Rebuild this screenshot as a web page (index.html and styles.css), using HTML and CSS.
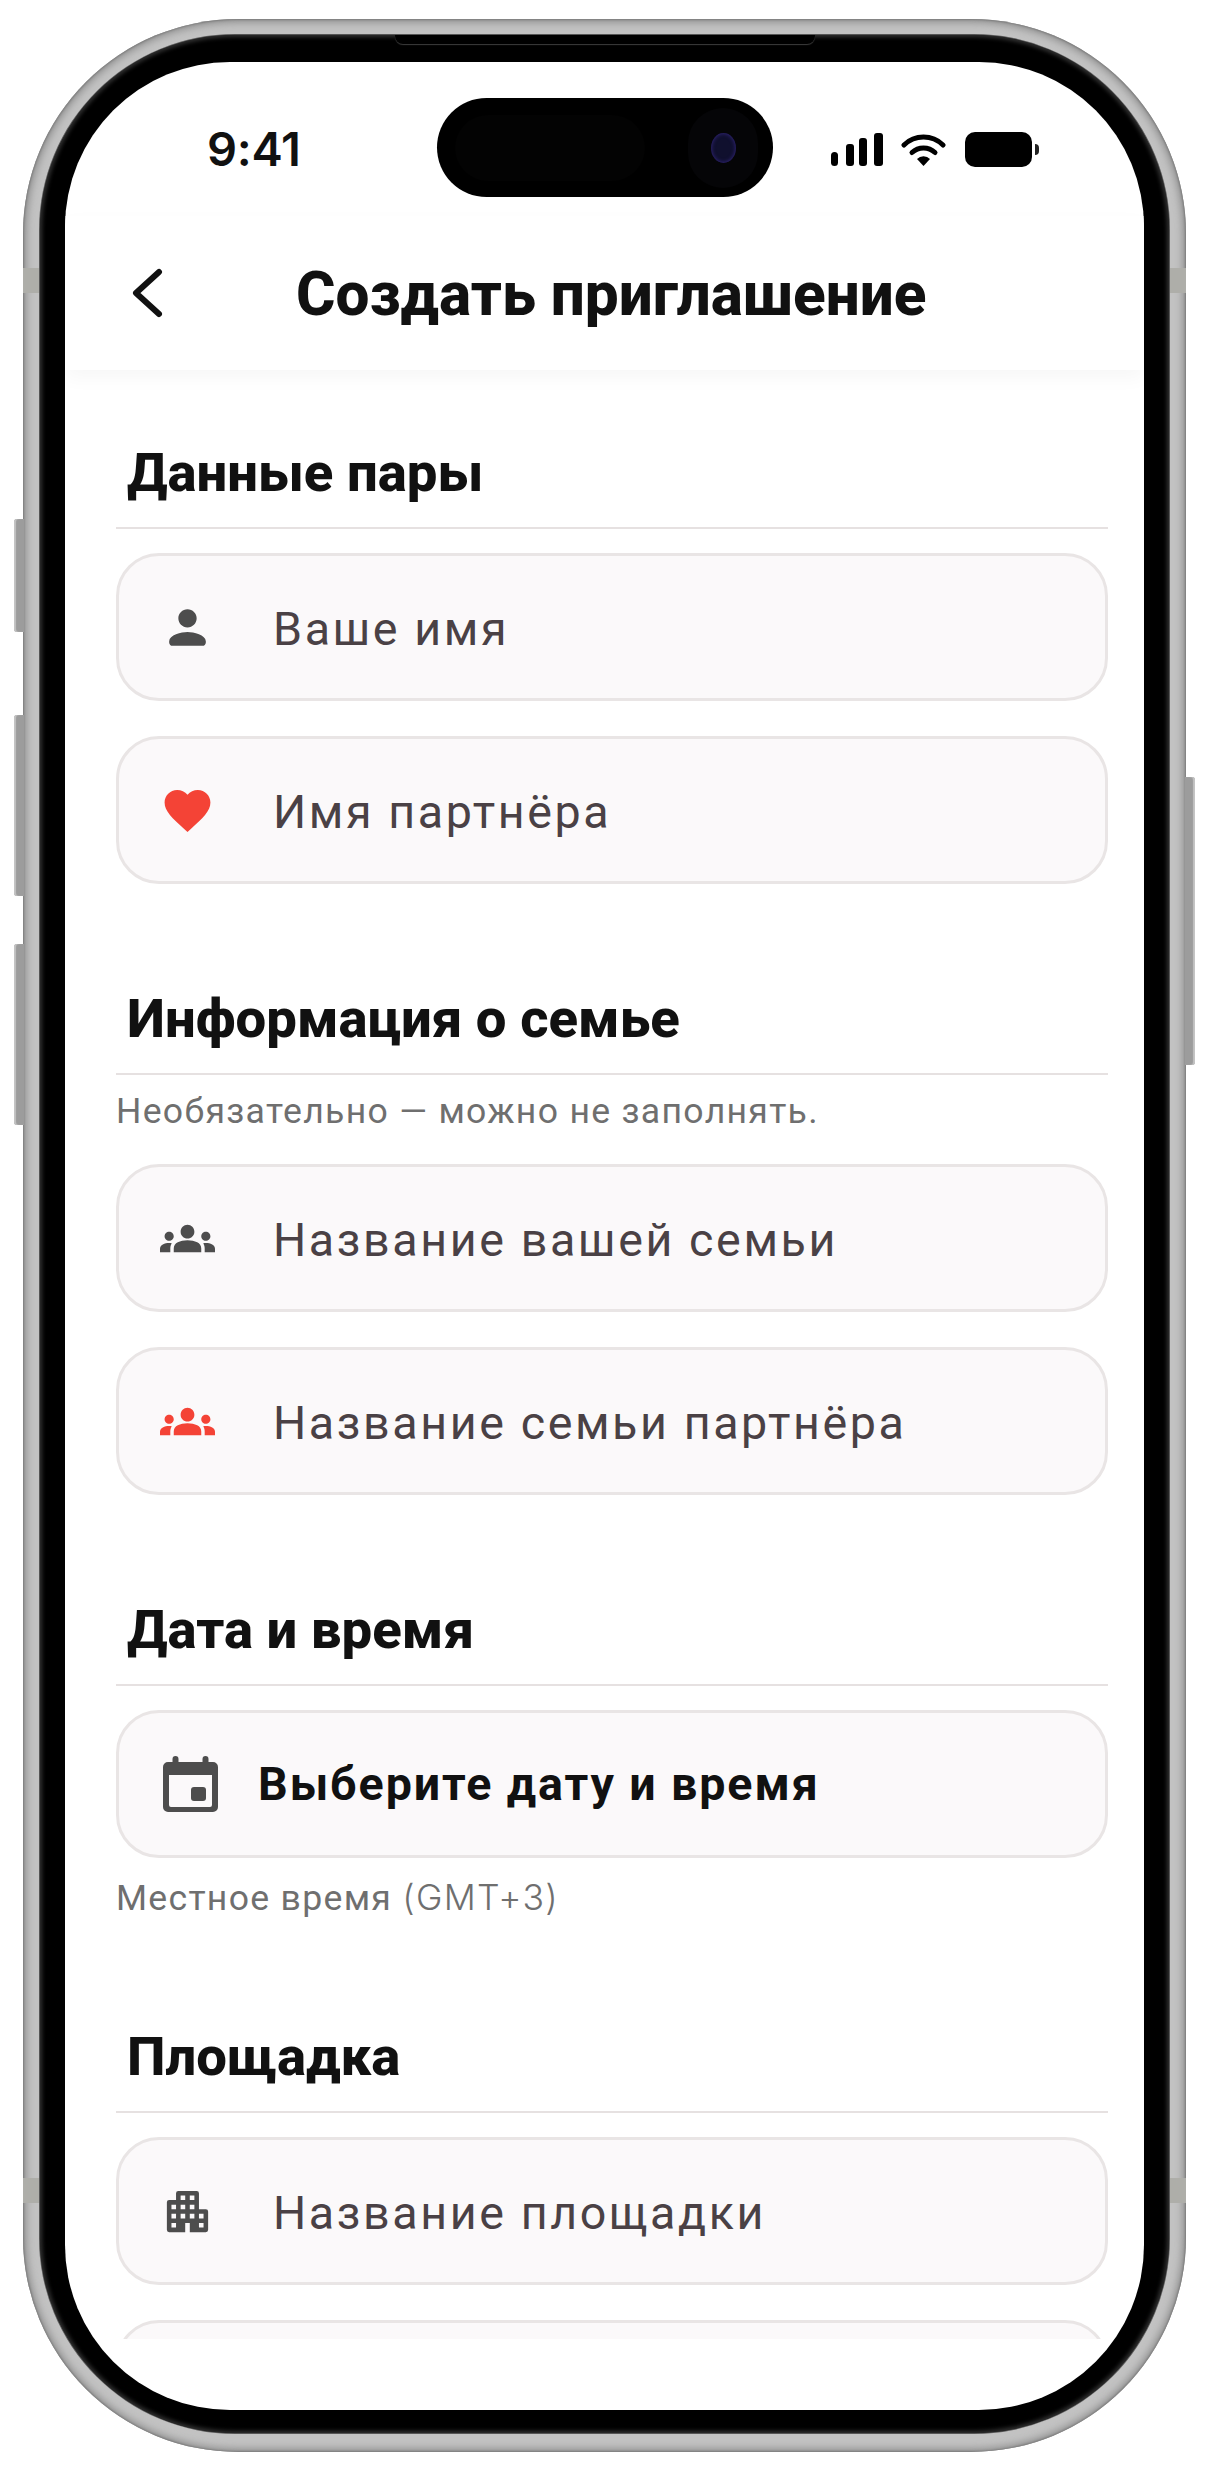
FILE: index.html
```html
<!DOCTYPE html>
<html lang="ru">
<head>
  <meta charset="UTF-8">
  <meta name="viewport" content="width=device-width, initial-scale=1.0">
  <title>Создать приглашение</title>
  <link rel="stylesheet" href="styles.css">
</head>
<body>
  <div class="phone">
    <!-- Side buttons -->
    <span class="side-btn btn-mute"></span>
    <span class="side-btn btn-up"></span>
    <span class="side-btn btn-down"></span>
    <span class="side-btn btn-power"></span>
    <span class="antenna antenna-tl"></span>
    <span class="antenna antenna-tr"></span>
    <span class="antenna antenna-bl"></span>
    <span class="antenna antenna-br"></span>

    <div class="shell">
      <span class="speaker"></span>
      <div class="screen">

        <!-- Status bar -->
        <div class="status-bar">
          <span class="time">9:41</span>
          <div class="island">
            <span class="island-sensor"></span>
            <span class="island-camera"><span class="lens"></span></span>
          </div>
          <div class="status-icons">
            <svg width="52" height="33" viewBox="0 0 52 33">
              <rect x="0" y="19" width="7" height="14" rx="3.5" />
              <rect x="15" y="11" width="8" height="22" rx="3" />
              <rect x="28" y="5" width="8" height="28" rx="3" />
              <rect x="43" y="0" width="9" height="33" rx="3" />
            </svg>
            <svg class="wifi" width="45" height="33" viewBox="0 0 45 33">
              <path d="M3 12 A 28 28 0 0 1 42 12" fill="none" stroke="#000" stroke-width="5" stroke-linecap="round" />
              <path d="M11 19.500 A 17 17 0 0 1 34 19.500" fill="none" stroke="#000" stroke-width="5" stroke-linecap="round" />
              <path d="M22.500 33 L16 26 A 9 9 0 0 1 29 26 Z" />
            </svg>
            <span class="battery"></span>
          </div>
        </div>

        <!-- Header -->
        <div class="app-header">
          <svg class="back" width="32" height="50" viewBox="0 0 32 50">
            <path d="M28 4 L5 25 L28 46" fill="none" stroke="#111" stroke-width="6" stroke-linecap="round" stroke-linejoin="round" />
          </svg>
          <h1>Создать приглашение</h1>
        </div>

        <div class="content">
          <section class="section">
            <h2>Данные пары</h2>
            <div class="field">
              <svg class="icon" viewBox="0 0 24 24"><path d="M12 12c2.210 0 4-1.790 4-4s-1.790-4-4-4-4 1.790-4 4 1.790 4 4 4zm0 2c-2.670 0-8 1.340-8 4v.500c0 .830.670 1.500 1.500 1.500h13c.830 0 1.500-.670 1.500-1.500V18c0-2.660-5.330-4-8-4z" /></svg>
              <span class="field-text">Ваше имя</span>
            </div>
            <div class="field">
              <svg class="icon red" viewBox="0 0 24 24"><path d="M12 21.350l-1.450-1.320C5.400 15.360 2 12.280 2 8.500 2 5.420 4.420 3 7.500 3c1.740 0 3.410.810 4.500 2.090C13.090 3.810 14.760 3 16.500 3 19.580 3 22 5.420 22 8.500c0 3.780-3.400 6.860-8.550 11.540L12 21.350z" /></svg>
              <span class="field-text">Имя партнёра</span>
            </div>
          </section>

          <section class="section">
            <h2>Информация о семье</h2>
            <p class="hint hint-top">Необязательно — можно не заполнять.</p>
            <div class="field">
              <svg class="icon" viewBox="0 0 24 24"><path d="M12 12.750c1.630 0 3.070.390 4.240.900 1.080.480 1.760 1.560 1.760 2.730V18H6v-1.610c0-1.180.680-2.260 1.760-2.730 1.170-.520 2.610-.910 4.240-.910zM4 13c1.100 0 2-.900 2-2s-.900-2-2-2-2 .900-2 2 .900 2 2 2zm1.130 1.100C4.760 14.040 4.390 14 4 14c-.990 0-1.930.210-2.780.580C.480 14.900 0 15.620 0 16.430V18h4.500v-1.610c0-.830.230-1.610.630-2.290zM20 13c1.100 0 2-.900 2-2s-.900-2-2-2-2 .900-2 2 .900 2 2 2zm4 3.430c0-.810-.480-1.530-1.220-1.850-.850-.370-1.790-.580-2.780-.580-.390 0-.760.040-1.130.100.400.680.630 1.460.630 2.290V18H24v-1.570zM12 6c1.660 0 3 1.340 3 3s-1.340 3-3 3-3-1.340-3-3 1.340-3 3-3z" /></svg>
              <span class="field-text">Название вашей семьи</span>
            </div>
            <div class="field">
              <svg class="icon red" viewBox="0 0 24 24"><path d="M12 12.750c1.630 0 3.070.390 4.240.900 1.080.480 1.760 1.560 1.760 2.730V18H6v-1.610c0-1.180.680-2.260 1.760-2.730 1.170-.520 2.610-.910 4.240-.910zM4 13c1.100 0 2-.900 2-2s-.900-2-2-2-2 .900-2 2 .900 2 2 2zm1.130 1.100C4.760 14.040 4.390 14 4 14c-.990 0-1.930.210-2.780.580C.480 14.900 0 15.620 0 16.430V18h4.500v-1.610c0-.830.230-1.610.630-2.290zM20 13c1.100 0 2-.900 2-2s-.900-2-2-2-2 .900-2 2 .900 2 2 2zm4 3.430c0-.810-.480-1.530-1.220-1.850-.850-.370-1.790-.580-2.780-.580-.390 0-.760.040-1.130.100.400.680.630 1.460.630 2.290V18H24v-1.570zM12 6c1.660 0 3 1.340 3 3s-1.340 3-3 3-3-1.340-3-3 1.340-3 3-3z" /></svg>
              <span class="field-text">Название семьи партнёра</span>
            </div>
          </section>

          <section class="section">
            <h2>Дата и время</h2>
            <div class="field field-date">
              <svg class="calendar" width="55" height="56" viewBox="0 0 55 56">
                <path fill-rule="evenodd" d="M12.500 0a3 3 0 0 1 3 3v3h24V3a3 3 0 0 1 6 0v3H50a5 5 0 0 1 5 5v40a5 5 0 0 1-5 5H5a5 5 0 0 1-5-5V11a5 5 0 0 1 5-5h4.500V3a3 3 0 0 1 3-3zM6 19v30a2 2 0 0 0 2 2h39a2 2 0 0 0 2-2V19z" />
                <rect x="28" y="31" width="15" height="14" rx="3" />
              </svg>
              <span class="field-text field-strong">Выберите дату и время</span>
            </div>
            <p class="hint hint-bottom">Местное время <span class="hint-tz">(GMT+3)</span></p>
          </section>

          <section class="section">
            <h2>Площадка</h2>
            <div class="field">
              <svg class="icon" viewBox="0 0 24 24"><path d="M17 11V4a1 1 0 0 0-1-1H8a1 1 0 0 0-1 1v3H4a1 1 0 0 0-1 1v12a1 1 0 0 0 1 1h7v-4h2v4h7a1 1 0 0 0 1-1v-8a1 1 0 0 0-1-1h-3zM7 19H5v-2h2v2zm0-4H5v-2h2v2zm0-4H5V9h2v2zm4 4H9v-2h2v2zm0-4H9V9h2v2zm0-4H9V5h2v2zm4 8h-2v-2h2v2zm0-4h-2V9h2v2zm0-4h-2V5h2v2zm4 12h-2v-2h2v2zm0-4h-2v-2h2v2z" /></svg>
              <span class="field-text">Название площадки</span>
            </div>
            <div class="field"></div>
          </section>
        </div>
      </div>
    </div>
  </div>
</body>
</html>
```

FILE: styles.css
```css
body {
  margin: 0;
  background-color: white;
  font-family: Roboto, "Noto Sans", sans-serif;
}

/* Phone frame */
.phone {
  position: relative;
  width: 1163px;
  height: 2433px;
  margin: 19px 0 0 23px;
  padding: 16px 17px 19px;
  box-sizing: border-box;
  border-radius: 215px;
  background-color: #c2c2c2;
  box-shadow: inset 0 0 2px 1px #7c7c7c, inset 0 0 7px 4px #969696;
}

.side-btn {
  position: absolute;
  width: 10px;
  border-radius: 3px 0 0 3px;
  background-color: #9c9c9c;
  box-shadow: inset 2px 0 1px #c4c4c4;
}

.btn-mute { left: -9px; top: 500px; height: 113px; }
.btn-up { left: -9px; top: 696px; height: 181px; }
.btn-down { left: -9px; top: 925px; height: 181px; }

.btn-power {
  right: -9px;
  top: 758px;
  height: 288px;
  border-radius: 0 3px 3px 0;
  box-shadow: inset -2px 0 1px #c4c4c4;
}

.antenna {
  position: absolute;
  width: 17px;
  height: 25px;
  background-color: #aeaea9;
}

.antenna-tl { left: 0; top: 249px; }
.antenna-tr { right: 0; top: 249px; }
.antenna-bl { left: 0; top: 2159px; }
.antenna-br { right: 0; top: 2159px; }

.shell {
  position: relative;
  height: 100%;
  padding: 27px 25px 23px;
  box-sizing: border-box;
  border-radius: 195px;
  background-color: #000;
  box-shadow: 0 0 0 1px #555, inset 0 0 4px 2px #333;
}

.speaker {
  position: absolute;
  left: 355px;
  top: 0;
  width: 420px;
  height: 9px;
  border-radius: 0 0 8px 8px;
  background-color: #000;
  box-shadow: 0 1px 1px #3c3c3c;
}

.screen {
  position: relative;
  height: 100%;
  overflow: hidden;
  border-radius: 165px;
  background-color: white;
}

/* Status bar */
.status-bar {
  display: flex;
  align-items: flex-start;
  height: 154px;
  padding-top: 36px;
  box-sizing: border-box;
}

.time {
  width: 372px;
  padding: 29px 0 0 142px;
  box-sizing: border-box;
  font-family: Inter, sans-serif;
  font-size: 47px;
  font-weight: 600;
  line-height: 44px;
  letter-spacing: -0.3px;
  color: #111;
}

.island {
  display: flex;
  align-items: center;
  justify-content: space-between;
  width: 336px;
  height: 99px;
  padding: 0 15px 0 18px;
  box-sizing: border-box;
  border-radius: 50px;
  background-color: #000;
}

.island-sensor {
  width: 190px;
  height: 66px;
  border-radius: 33px;
  background-color: #030303;
}

.island-camera {
  display: flex;
  align-items: center;
  justify-content: center;
  width: 70px;
  height: 80px;
  border-radius: 40px;
  background-color: #050507;
}

.lens {
  width: 25px;
  height: 30px;
  border-radius: 50%;
  background-color: #10102e;
  box-shadow: inset 0 0 4px #3a2a8a;
}

.status-icons {
  display: flex;
  align-items: center;
  gap: 18px;
  margin: 34px 0 0 58px;
}

.wifi {
  margin-right: 1px;
}

.battery {
  position: relative;
  width: 67px;
  height: 35px;
  border-radius: 10px;
  background-color: #000;
}

.battery::after {
  content: "";
  position: absolute;
  right: -7px;
  top: 12px;
  width: 4px;
  height: 11px;
  border-radius: 0 4px 4px 0;
  background-color: #222;
}

/* Header */
.app-header {
  position: relative;
  display: flex;
  align-items: center;
  height: 154px;
  padding-left: 66px;
  box-sizing: border-box;
  background-color: white;
  box-shadow: 0 8px 18px rgba(0, 0, 0, 0.035);
}

.app-header h1 {
  margin: 4px 0 0 133px;
  font-size: 60.300px;
  font-weight: 800;
  line-height: 64px;
  color: #111;
}

/* Form */
.content {
  height: 1969px;
  padding: 75px 36px 0 51px;
  box-sizing: border-box;
  overflow: hidden;
}

.section {
  margin-bottom: 107px;
}

.section h2 {
  margin: 0 0 24px;
  padding: 0 0 28px 11px;
  border-bottom: 2px solid #e6e1e1;
  font-size: 54.500px;
  font-weight: 800;
  line-height: 54px;
  color: #111;
}

.hint {
  font-size: 35.600px;
  line-height: 40px;
  letter-spacing: 1.3px;
  color: #6f6f6f;
}

.hint-top {
  margin: -8px 0 33px;
}

.hint-bottom {
  margin: -15px 0 0;
  padding-bottom: 4px;
}

.hint-tz {
  font-family: Inter, sans-serif;
  font-weight: 300;
}

.field {
  display: flex;
  align-items: center;
  height: 148px;
  margin-bottom: 35px;
  padding-left: 41px;
  box-sizing: border-box;
  border: 3px solid #e9e5e5;
  border-radius: 43px;
  background-color: #fbf9fa;
}

.field:last-child {
  margin-bottom: 0;
}

.icon {
  width: 55px;
  height: 55px;
  margin-right: 58px;
  flex-shrink: 0;
  fill: #4d4d4d;
}

.icon.red {
  fill: #f44336;
}

.calendar {
  margin: 0 40px 0 3px;
  flex-shrink: 0;
  fill: #4d4d4d;
}

.field-text {
  margin-top: 3px;
  font-size: 46.600px;
  letter-spacing: 2.600px;
  color: #4a4145;
}

.field-strong {
  margin-top: 0;
  font-weight: 700;
  letter-spacing: 1.900px;
  color: #111;
}
```
